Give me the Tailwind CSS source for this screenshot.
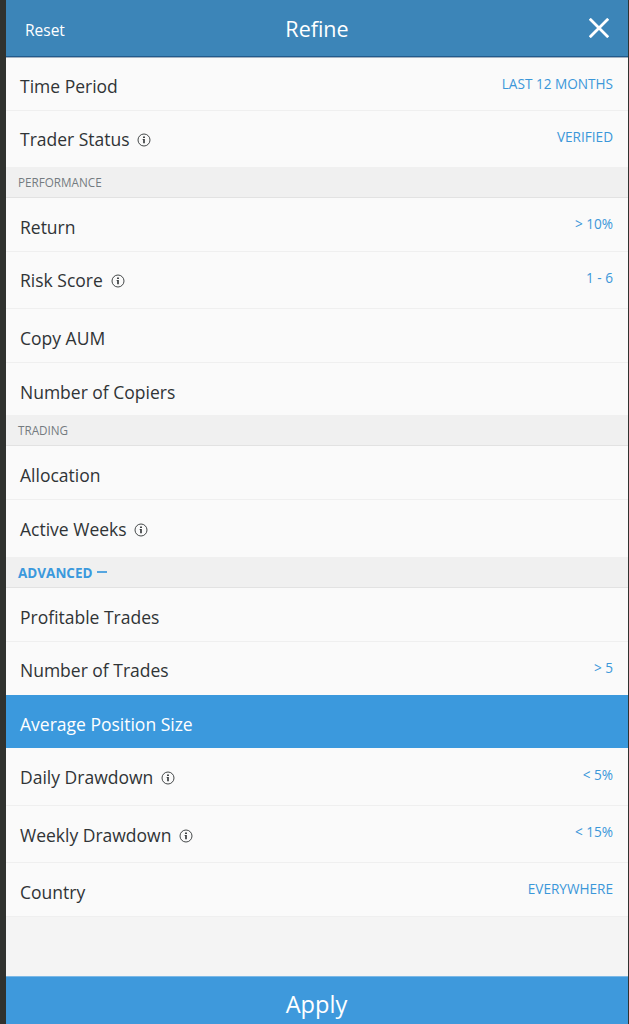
<!DOCTYPE html>
<html lang="en">
<head>
  <meta charset="UTF-8" />
  <meta name="viewport" content="width=device-width, initial-scale=1.0" />
  <title>Refine</title>
  <script src="https://cdn.jsdelivr.net/npm/@tailwindcss/browser@4"></script>
</head>
<body class="bg-[#30322f] font-['Open_Sans','Noto_Sans',sans-serif]">

  <!-- Icon used by the filter rows -->
  <svg class="hidden">
    <symbol id="info" viewBox="0 0 14 14">
      <circle cx="7" cy="7" r="6" fill="none" stroke="currentColor" stroke-width=".9" />
      <path d="M6.1 3.5h1.8v1.4H6.1zM5.6 5.9h2.2v4.4H6.2V6.7h-.6z" fill="currentColor" />
    </symbol>
  </svg>

  <div class="ml-[6px] mr-px h-[1024px] flex flex-col overflow-hidden bg-[#f4f4f4] text-[17.5px] leading-6 text-[#303436]">

    <!-- Header -->
    <header class="h-[58px] shrink-0 grid grid-cols-3 items-center pl-[19px] pr-[19px] pb-px bg-[#3c85b8] border-b border-[#a3b1c0] shadow-[inset_0_-1px_0_#215a8c] text-white">
      <button class="justify-self-start pt-[4px] text-[15.5px]">Reset</button>
      <h1 class="justify-self-center pt-px text-[21.5px] leading-8">Refine</h1>
      <button class="justify-self-end">
        <svg class="block size-5" viewBox="0 0 20 20" fill="none" stroke="currentColor" stroke-width="2.8">
          <path d="M.8.8l18.4 18.4M19.2.8L.8 19.2" />
        </svg>
      </button>
    </header>

    <ul class="shrink-0">
      <li class="h-[53px] flex justify-between items-start pt-4 pl-[14px] pr-[15px] bg-[#fafafa] border-b border-[#efefef]">
        <span>Time Period</span>
        <span class="text-[13.6px] leading-5 text-[#3b97d9]">LAST 12 MONTHS</span>
      </li>
      <li class="h-[56px] flex justify-between items-start pt-4 pl-[14px] pr-[15px] bg-[#fafafa]">
        <span class="flex items-center gap-[7px]">Trader Status <svg class="mt-[2px] size-[14px]"><use href="#info" /></svg></span>
        <span class="text-[13.6px] leading-5 text-[#3b97d9]">VERIFIED</span>
      </li>
    </ul>

    <h2 class="h-[31px] shrink-0 flex items-center pl-3 bg-[#f0f0f0] border-b border-[#e2e2e2] text-[11.7px] text-[#747b80]">PERFORMANCE</h2>
    <ul class="shrink-0">
      <li class="h-[54px] flex justify-between items-start pt-4 pl-[14px] pr-[15px] bg-[#fafafa] border-b border-[#efefef]">
        <span class="pt-px">Return</span>
        <span class="text-[13.6px] leading-5 text-[#3b97d9]">&gt; 10%</span>
      </li>
      <li class="h-[57px] flex justify-between items-start pt-4 pl-[14px] pr-[15px] bg-[#fafafa] border-b border-[#efefef]">
        <span class="flex items-center gap-[8px]">Risk Score <svg class="mt-[2px] size-[14px]"><use href="#info" /></svg></span>
        <span class="text-[13.6px] leading-5 text-[#3b97d9]">1 - 6</span>
      </li>
      <li class="h-[54px] flex items-start pt-[17px] pl-[14px] bg-[#fafafa] border-b border-[#efefef]">Copy AUM</li>
      <li class="h-[52px] flex items-start pt-[17px] pl-[14px] bg-[#fafafa]">Number of Copiers</li>
    </ul>

    <h2 class="h-[31px] shrink-0 flex items-center pl-3 bg-[#f0f0f0] border-b border-[#e2e2e2] text-[11.7px] text-[#747b80]">TRADING</h2>
    <ul class="shrink-0">
      <li class="h-[54px] flex items-start pt-[17px] pl-[14px] bg-[#fafafa] border-b border-[#efefef]">Allocation</li>
      <li class="h-[57px] flex items-start pt-[17px] pl-[14px] bg-[#fafafa]">
        <span class="flex items-center gap-[7px]">Active Weeks <svg class="mt-[2px] size-[14px]"><use href="#info" /></svg></span>
      </li>
    </ul>

    <h2 class="h-[31px] shrink-0 flex items-center gap-[4px] pt-px pl-3 bg-[#f0f0f0] border-b border-[#e2e2e2] text-[13.5px] font-bold text-[#3b99dd]">
      ADVANCED
      <span class="mb-px w-[10px] h-[2px] bg-[#3b99dd]/85"></span>
    </h2>
    <ul class="shrink-0">
      <li class="h-[54px] flex items-start pt-[17px] pl-[14px] bg-[#fafafa] border-b border-[#efefef]">Profitable Trades</li>
      <li class="h-[53px] flex justify-between items-start pt-4 pl-[14px] pr-[15px] bg-[#fafafa]">
        <span>Number of Trades</span>
        <span class="text-[13.6px] leading-5 text-[#3b97d9]">&gt; 5</span>
      </li>
      <li class="h-[53px] flex items-start pt-[17px] pl-[14px] bg-[#3b99dd] text-white">Average Position Size</li>
      <li class="h-[58px] flex justify-between items-start pt-[17px] pl-[14px] pr-[15px] bg-[#fafafa] border-b border-[#efefef]">
        <span class="flex items-center gap-[8px]">Daily Drawdown <svg class="mt-[2px] size-[14px]"><use href="#info" /></svg></span>
        <span class="text-[13.6px] leading-5 text-[#3b97d9]">&lt; 5%</span>
      </li>
      <li class="h-[57px] flex justify-between items-start pt-4 pl-[14px] pr-[15px] bg-[#fafafa] border-b border-[#efefef]">
        <span class="flex items-center gap-[8px] pt-px">Weekly Drawdown <svg class="mt-[2px] size-[14px]"><use href="#info" /></svg></span>
        <span class="text-[13.6px] leading-5 text-[#3b97d9]">&lt; 15%</span>
      </li>
      <li class="h-[54px] flex justify-between items-start pt-4 pl-[14px] pr-[15px] bg-[#fafafa] border-b border-[#efefef]">
        <span class="pt-px">Country</span>
        <span class="text-[13.6px] leading-5 text-[#3b97d9]">EVERYWHERE</span>
      </li>
    </ul>

    <button class="mt-auto h-12 shrink-0 pt-[6px] pr-px bg-[#3e99dc] border-t border-[#7bb8e6] text-[23.6px] leading-8 text-white">Apply</button>
  </div>

</body>
</html>
